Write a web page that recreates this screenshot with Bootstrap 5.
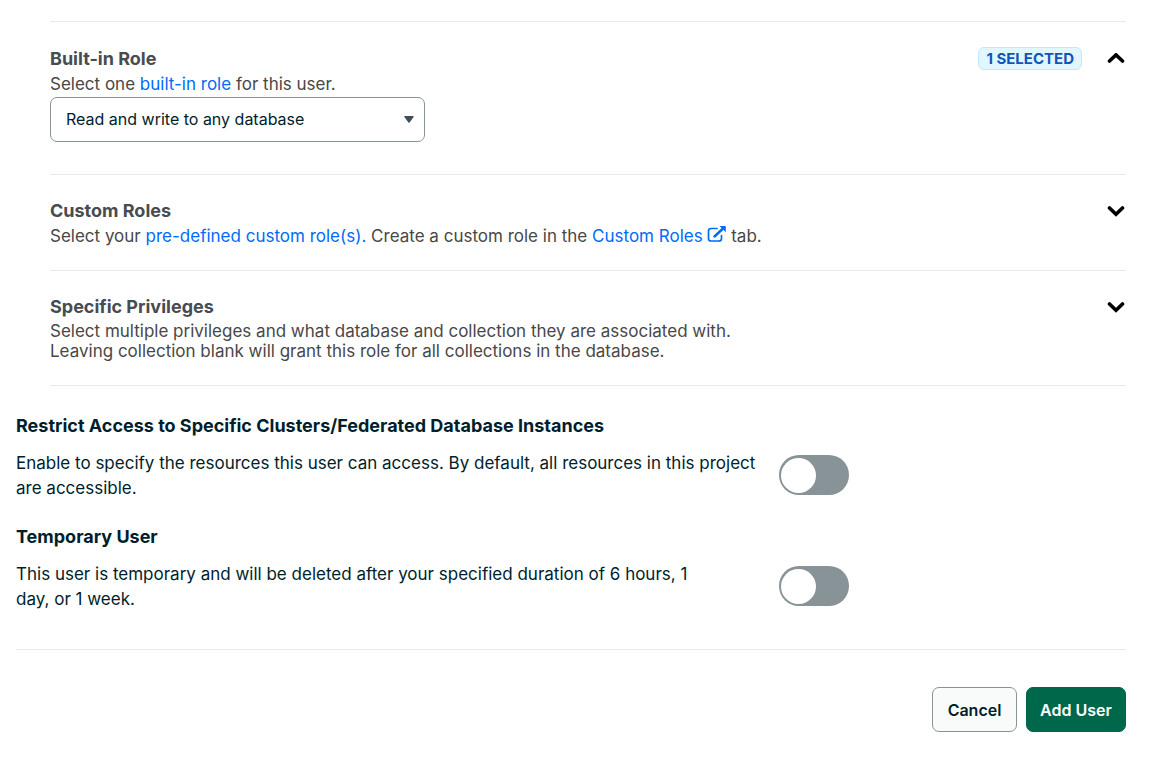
<!DOCTYPE html>
<html lang="en">
<head>
<meta charset="utf-8">
<meta name="viewport" content="width=device-width, initial-scale=1">
<title>Add User</title>
<link href="https://cdn.jsdelivr.net/npm/bootstrap@5.3.0/dist/css/bootstrap.min.css" rel="stylesheet">
<style>
body { font-family: Inter, "Liberation Sans", sans-serif; font-size: 17px; line-height: 26px; color: #001e2b; background: #fff; }
.sheet { padding: 21px 26px 34px 16px; }
a { color: #016bf8; text-decoration: none; }
.roles { margin-left: 34px; border-top: 1px solid #e7eaea; color: #494747; }
.role { padding: 23px 0 21px; border-bottom: 1px solid #e7eaea; }
.role-open { padding: 24px 0 32px; }
h2, h3 { font-size: 18px; font-weight: 700; margin: 0; }
h2 { line-height: 25px; color: #464c4f; }
h3 { line-height: 24px; }
p { margin: 0; }
.role-head { height: 25px; }
.role-long { padding-bottom: 24px; }
.role-long p { line-height: 20px; margin-top: 2px; }
.tag { font-size: 15px; line-height: 21px; font-weight: 700; color: #1254b7; background: #e1f7ff; border: 1px solid #c3e7fe; border-radius: 6px; padding: 0 7px; }
.fold { border: 0; background: none; padding: 0; width: 20px; height: 24px; display: flex; align-items: center; justify-content: center; }
.role-pick { width: 375px; height: 45px; font-size: 16px; color: #001e2b; border: 1px solid #889397; border-radius: 7px; padding: 0 32px 2px 15px;
  background-image: url("data:image/svg+xml,%3Csvg xmlns='http://www.w3.org/2000/svg' viewBox='0 0 10 7'%3E%3Cpath d='M1 0h8q1 0 .6 1L5.6 6.4q-.6.8-1.2 0L.4 1Q0 0 1 0z' fill='%233d4f58'/%3E%3C/svg%3E");
  background-size: 10px 7px; background-position: right 10px center; }
.options { padding-top: 28px; display: grid; row-gap: 24px; }
.option p { width: 763px; line-height: 25px; padding-top: 2px; }
.option-row { margin-top: 11px; }
.form-check-input.toggle { width: 70px; height: 40px; margin: 0; flex: none; border: 0; background-color: #889397;
  background-image: url("data:image/svg+xml,%3Csvg xmlns='http://www.w3.org/2000/svg' viewBox='0 0 40 40'%3E%3Ccircle cx='19.5' cy='20.5' r='17.5' fill='%23fff'/%3E%3C/svg%3E"); background-size: 40px 40px; background-position: left center; }
.actions { margin-top: 37px; padding-top: 37px; border-top: 1px solid #e7eaea; gap: 9px; }
.act { height: 45px; font-size: 16px; font-weight: 600; border-radius: 7px; padding: 0; }
.act-cancel { width: 85px; color: #001e2b; background: #f9fbfa; border: 1px solid #889397; }
.act-add { width: 100px; color: #fff; background: #00684a; border: 1px solid #00684a; }
</style>
</head>
<body>
<main class="sheet">
  <div class="roles">
    <section class="role role-open">
      <div class="role-head d-flex align-items-center">
        <h2 class="flex-grow-1"><label for="builtin">Built-in Role</label></h2>
        <span class="tag me-4">1 SELECTED</span>
        <button class="fold" type="button" aria-label="Collapse built-in role" aria-expanded="true"><svg width="18" height="12" viewBox="0 0 18 12" fill="none" stroke="#000" stroke-width="3.6" stroke-linecap="round"><path d="M2.5 8 9 1.900l6.500 6.100"/></svg></button>
      </div>
      <p>Select one <a href="#">built-in role</a> for this user.</p>
      <select class="form-select role-pick" id="builtin"><option>Read and write to any database</option></select>
    </section>
    <section class="role">
      <div class="role-head d-flex align-items-center">
        <h2 class="flex-grow-1">Custom Roles</h2>
        <button class="fold" type="button" aria-label="Expand custom roles" aria-expanded="false"><svg width="18" height="12" viewBox="0 0 18 12" fill="none" stroke="#000" stroke-width="3.6" stroke-linecap="round"><path d="M2.500 3 9 9.200 15.500 3"/></svg></button>
      </div>
      <p>Select your <a href="#">pre-defined custom role(s).</a> Create a custom role in the <a href="#">Custom Roles <svg class="align-baseline" width="19" height="16" viewBox="0 0 19 16"><path d="M10 2.500H4Q1.500 2.500 1.500 5v7.500Q1.500 15 4 15h8q2.500 0 2.500-2.500V9.500" fill="none" stroke="#016bf8" stroke-width="1.700" stroke-linecap="round"/><path d="m7.500 10.500 8-7.500" stroke="#016bf8" stroke-width="2.500" stroke-linecap="round"/><path d="M12.500 0H18q.8 0 .8.800V6.200z" fill="#016bf8"/></svg></a> tab.</p>
    </section>
    <section class="role role-long">
      <div class="role-head d-flex align-items-center">
        <h2 class="flex-grow-1">Specific Privileges</h2>
        <button class="fold" type="button" aria-label="Expand specific privileges" aria-expanded="false"><svg width="18" height="12" viewBox="0 0 18 12" fill="none" stroke="#000" stroke-width="3.6" stroke-linecap="round"><path d="M2.500 3 9 9.200 15.500 3"/></svg></button>
      </div>
      <p>Select multiple privileges and what database and collection they are associated with.<br>Leaving collection blank will grant this role for all collections in the database.</p>
    </section>
  </div>
  <div class="options">
    <section class="option">
      <h3><label for="restrict">Restrict Access to Specific Clusters/Federated Database Instances</label></h3>
      <div class="option-row d-flex align-items-center">
        <p>Enable to specify the resources this user can access. By default, all resources in this project<br>are accessible.</p>
        <input class="form-check-input toggle rounded-pill" type="checkbox" role="switch" id="restrict">
      </div>
    </section>
    <section class="option">
      <h3><label for="temporary">Temporary User</label></h3>
      <div class="option-row d-flex align-items-center">
        <p>This user is temporary and will be deleted after your specified duration of 6 hours, 1<br>day, or 1 week.</p>
        <input class="form-check-input toggle rounded-pill" type="checkbox" role="switch" id="temporary">
      </div>
    </section>
  </div>
  <div class="actions d-flex justify-content-end">
    <button class="btn act act-cancel" type="button">Cancel</button>
    <button class="btn act act-add" type="button">Add User</button>
  </div>
</main>
<script src="https://cdn.jsdelivr.net/npm/bootstrap@5.3.0/dist/js/bootstrap.bundle.min.js"></script>
</body>
</html>
